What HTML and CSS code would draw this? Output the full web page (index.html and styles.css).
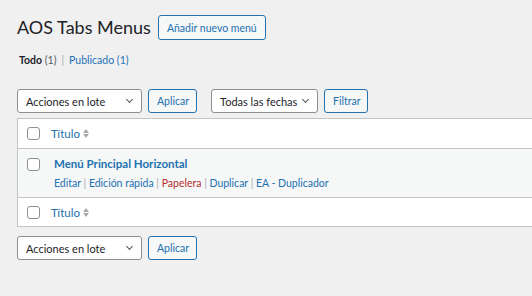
FILE: index.html
```html
<!DOCTYPE html>
<html lang="es">
<head>
    <meta charset="UTF-8">
    <title>AOS Tabs Menus</title>
    <link rel="stylesheet" href="styles.css">
</head>
<body>
    <div class="wrap">
        <div class="heading">
            <h1>AOS Tabs Menus</h1>
            <a class="page-title-action" href="#">Añadir nuevo menú</a>
        </div>

        <ul class="subsubsub">
            <li><span class="current">Todo</span> <span class="count">(1)</span></li>
            <li class="sep">|</li>
            <li><a href="#">Publicado <span class="count">(1)</span></a></li>
        </ul>

        <!-- Top tablenav -->
        <div class="tablenav">
            <div class="select select-bulk">Acciones en lote<span class="chev"></span></div>
            <button class="button button-apply">Aplicar</button>
            <div class="select select-date">Todas las fechas<span class="chev"></span></div>
            <button class="button button-filter">Filtrar</button>
        </div>

        <div class="list-table">
            <div class="row row-head">
                <span class="check"></span>
                <a class="sort" href="#">Título <span class="sort-icon"></span></a>
            </div>
            <div class="row row-item">
                <span class="check"></span>
                <div class="item">
                    <a class="row-title" href="#">Menú Principal Horizontal</a>
                    <div class="row-actions">
                        <a href="#">Editar</a> <span class="sep">|</span>
                        <a href="#">Edición rápida</a> <span class="sep">|</span>
                        <a class="trash" href="#">Papelera</a> <span class="sep">|</span>
                        <a href="#">Duplicar</a> <span class="sep">|</span>
                        <a href="#">EA - Duplicador</a>
                    </div>
                </div>
            </div>
            <div class="row row-foot">
                <span class="check"></span>
                <a class="sort" href="#">Título <span class="sort-icon"></span></a>
            </div>
        </div>

        <!-- Bottom tablenav -->
        <div class="tablenav tablenav-bottom">
            <div class="select select-bulk">Acciones en lote<span class="chev"></span></div>
            <button class="button button-apply">Aplicar</button>
        </div>
    </div>
</body>
</html>
```

FILE: styles.css
```css
:root {
    --blue: #2271b1;
    --border: #c3c4c7;
    --text: #1d2327;
    --muted: #50575e;
    --bg: #f0f0f1;
}

* {
    margin: 0;
    padding: 0;
    box-sizing: border-box;
}

body {
    background: var(--bg);
    color: var(--text);
    font-family: "Lato", "Noto Sans", sans-serif;
    font-size: 11px;
    overflow: hidden;
}

a {
    color: var(--blue);
    text-decoration: none;
}

.wrap {
    padding: 14px 0 0 17px;
}

/* Heading */
.heading {
    display: flex;
    align-items: center;
    height: 26px;
}

h1 {
    font-size: 18px;
    font-weight: 400;
    color: var(--text);
    line-height: 26px;
}

.page-title-action {
    margin-left: 7px;
    margin-top: 1px;
    height: 25px;
    padding: 0 8px;
    display: flex;
    align-items: center;
    border: 1px solid var(--blue);
    border-radius: 3px;
    background: #f6f7f7;
    font-size: 10.5px;
}

/* Filters */
.subsubsub {
    list-style: none;
    display: flex;
    gap: 5px;
    margin: 12px 0 0 2px;
    height: 16px;
    line-height: 16px;
    font-size: 10.5px;
}

.subsubsub .current {
    font-weight: 700;
}

.subsubsub .count {
    color: var(--muted);
}

.subsubsub a .count {
    color: var(--blue);
}

.subsubsub .sep {
    color: #a7aaad;
}

/* Tablenav */
.tablenav {
    display: flex;
    align-items: center;
    margin-top: 21px;
    height: 24px;
}

.select {
    position: relative;
    height: 24px;
    display: flex;
    align-items: center;
    padding-left: 8px;
    background: #fff;
    border: 1px solid #8c8f94;
    border-radius: 3px;
    font-size: 11px;
    color: var(--text);
}

.select-bulk {
    width: 125px;
}

.select-date {
    width: 107px;
    margin-left: 14px;
}

.chev {
    position: absolute;
    right: 9px;
    top: 7px;
    width: 5px;
    height: 5px;
    border-right: 1px solid #50575e;
    border-bottom: 1px solid #50575e;
    transform: rotate(45deg);
}

.button {
    height: 24px;
    margin-left: 6px;
    padding: 0 8px;
    border: 1px solid var(--blue);
    border-radius: 3px;
    background: #f6f7f7;
    color: var(--blue);
    font-family: inherit;
    font-size: 10.5px;
}

.button-apply {
    width: 49px;
}

.button-filter {
    width: 44px;
}

/* Table */
.list-table {
    margin-top: 5px;
    background: #fff;
    border: 1px solid var(--border);
    border-right: 0;
}

.row {
    display: flex;
    align-items: center;
}

.row-head {
    height: 30px;
    border-bottom: 1px solid var(--border);
}

.row-item {
    height: 49px;
    align-items: flex-start;
    background: #f6f7f7;
    border-bottom: 1px solid var(--border);
}

.row-foot {
    height: 28px;
}

.check {
    flex: none;
    width: 13px;
    height: 13px;
    margin-left: 9px;
    border: 1px solid #8c8f94;
    border-radius: 3px;
    background: #fff;
}

.row-item .check {
    margin-top: 9px;
}

.sort {
    margin-left: 11px;
    display: flex;
    align-items: center;
    gap: 3px;
    font-size: 11.5px;
}

.sort-icon {
    display: flex;
    flex-direction: column;
    gap: 1px;
}

.sort-icon::before,
.sort-icon::after {
    content: '';
    border-left: 3.5px solid transparent;
    border-right: 3.5px solid transparent;
}

.sort-icon::before {
    border-bottom: 4px solid #a7aaad;
}

.sort-icon::after {
    border-top: 4px solid #a7aaad;
}

.item {
    margin-left: 14px;
    padding-top: 7px;
}

.row-title {
    display: block;
    font-size: 11.5px;
    font-weight: 700;
    line-height: 16px;
}

.row-actions {
    margin-top: 4px;
    font-size: 10.5px;
    line-height: 14px;
    color: #a7aaad;
}

.row-actions .trash {
    color: #b32d2e;
}

.tablenav-bottom {
    margin-top: 9px;
}
```
